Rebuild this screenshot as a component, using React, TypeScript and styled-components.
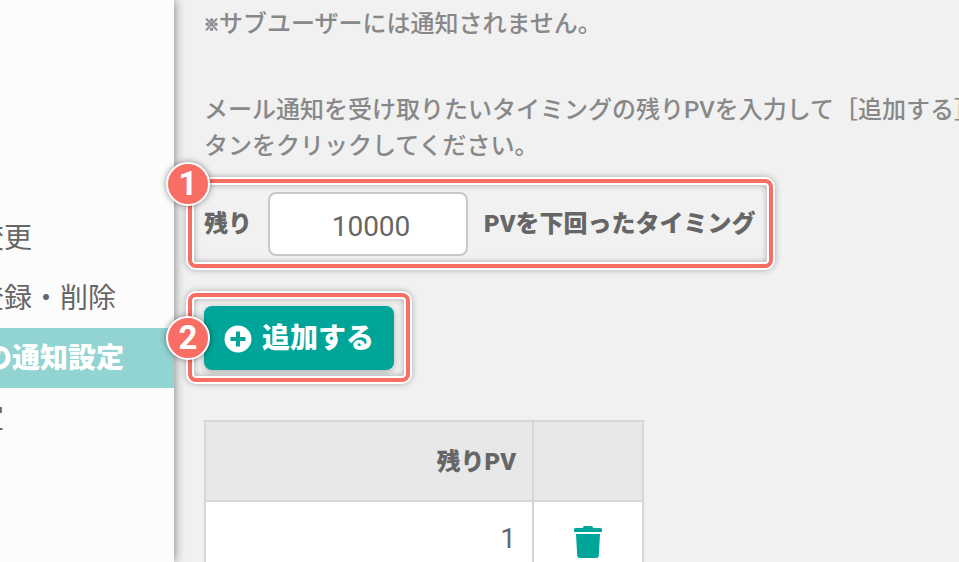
import React from "react";
import styled, { createGlobalStyle } from "styled-components";

const GlobalStyle = createGlobalStyle`
  *, *::before, *::after { box-sizing: border-box; }
  body {
    margin: 0;
    background: #f1f1f1;
    color: #666;
    font-family: Roboto, "Noto Sans CJK JP", sans-serif;
    font-size: 24px;
    line-height: 36px;
  }
`;

const Page = styled.div`
  display: flex;
  height: 100vh;
  overflow: hidden;
`;

const Sidebar = styled.nav`
  position: relative;
  flex: 0 0 174px;
  padding-top: 208px;
  background: #fcfcfc;
  box-shadow: 0 0 10px rgba(0, 0, 0, 0.5);
`;

const Menu = styled.ul`
  margin: 0;
  padding: 0;
  list-style: none;
  overflow: hidden;
`;

const MenuLink = styled.a<{ $active?: boolean }>`
  display: block;
  height: 60px;
  text-indent: ${(p) => (p.$active ? "-16px" : "-24px")};
  font-size: 28px;
  line-height: 62px;
  white-space: nowrap;
  text-decoration: none;
  font-weight: ${(p) => (p.$active ? 900 : 400)};
  color: ${(p) => (p.$active ? "#fff" : "#666")};
  background: ${(p) => (p.$active ? "#92d4d1" : "transparent")};
`;

const Main = styled.main`
  flex: 1;
  min-width: 0;
  padding: 6px 0 0 30px;
`;

const Note = styled.p`
  margin: 0;
  color: #888;
  font-weight: 500;
  white-space: nowrap;
`;

const NoteMark = styled.span`
  font-size: 15px;
  line-height: 15px;
  vertical-align: 2px;
  -webkit-text-stroke: 1px currentColor;
`;

const Guide = styled(Note)`
  margin-top: 50px;
`;

const Frame = styled.div`
  position: relative;
  display: flex;
  align-items: center;
  gap: 16px;
  width: fit-content;
  margin: 0 0 25px -16px;
  padding: 9px 12px 8px;
  border: 4px solid #f86e64;
  border-radius: 8px;
  box-shadow:
    0 0 0 2px #fff,
    0 0 6px 2px rgba(0, 0, 0, 0.3),
    inset 0 0 0 2px #fff,
    inset 0 0 6px 2px rgba(0, 0, 0, 0.3);
`;

const ThresholdFrame = styled(Frame)`
  margin-top: 15px;
  padding-right: 13px;
`;

const Badge = styled.span<{ $middle?: boolean }>`
  position: absolute;
  left: -26px;
  top: ${(p) => (p.$middle ? "calc(50% - 22px)" : "-21px")};
  width: 44px;
  height: 44px;
  border: 2px solid #fff;
  border-radius: 50%;
  background: #f86e64;
  box-shadow: 0 0 6px rgba(0, 0, 0, 0.45);
  color: #fff;
  font-size: 33px;
  font-weight: 700;
  line-height: 40px;
  text-align: center;
`;

const FieldLabel = styled.label`
  font-weight: 900;
  white-space: nowrap;
`;

const NumberInput = styled.input`
  width: 200px;
  height: 64px;
  padding: 4px 0 0 6px;
  border: 2px solid #c8c8c8;
  border-radius: 8px;
  background: #fff;
  color: #666;
  font: 400 28px Roboto, "Noto Sans CJK JP", sans-serif;
  text-align: center;
`;

const AddButton = styled.button`
  display: flex;
  align-items: center;
  gap: 10px;
  height: 64px;
  padding: 2px 20px 0;
  border: 0;
  border-radius: 8px;
  background: #00a59a;
  box-shadow: 0 2px 6px rgba(0, 0, 0, 0.25);
  color: #fff;
  font: 900 28px/60px Roboto, "Noto Sans CJK JP", sans-serif;
  white-space: nowrap;
`;

const Table = styled.table`
  width: 440px;
  margin-top: 38px;
  border-collapse: collapse;
  table-layout: fixed;
`;

const HeadCell = styled.th<{ $action?: boolean }>`
  width: ${(p) => (p.$action ? "110px" : "auto")};
  height: 80px;
  padding: 2px 16px 0;
  border: 2px solid #d6d6d6;
  background: #e8e8e8;
  text-align: right;
  font-weight: 900;
`;

const Cell = styled.td<{ $action?: boolean }>`
  height: 80px;
  padding: ${(p) => (p.$action ? "0 0 2px" : "0 16px 4px")};
  border: 2px solid #d6d6d6;
  background: #fff;
  font-size: 28px;
  text-align: ${(p) => (p.$action ? "center" : "right")};
`;

const IconButton = styled.button`
  display: inline-flex;
  padding: 0;
  border: 0;
  background: none;
  color: #00a59a;
  vertical-align: middle;
`;

const PlusIcon = () => (
  <svg width="28" height="28" viewBox="0 0 28 28" aria-hidden="true">
    <circle cx="14" cy="14" r="13.5" fill="#fff" />
    <path d="M14 6.5v15M6.5 14h15" stroke="#00a59a" strokeWidth="4" />
  </svg>
);

const TrashIcon = () => (
  <svg width="28" height="32" viewBox="0 0 28 32" fill="currentColor" aria-hidden="true">
    <path d="M10.500 0h7q1.500 0 1.500 2H26.500q1.500 0 1.500 1.500V6H0V3.500Q0 2 1.500 2H9q0-2 1.500-2z" />
    <path d="M2 8h24l-1.200 21.500q-.2 2.500-2.500 2.500H5.700q-2.300 0-2.500-2.500z" />
  </svg>
);

export default function App() {
  return (
    <>
      <GlobalStyle />
      <Page>
        <Sidebar>
          <Menu>
            <li><MenuLink href="#change">変更</MenuLink></li>
            <li><MenuLink href="#register">登録・削除</MenuLink></li>
            <li><MenuLink href="#notice" $active aria-current="page">の通知設定</MenuLink></li>
            <li><MenuLink href="#settings">定</MenuLink></li>
          </Menu>
        </Sidebar>
        <Main>
          <Note><NoteMark>※</NoteMark>サブユーザーには通知されません。</Note>
          <Guide>
            メール通知を受け取りたいタイミングの残りPVを入力して［追加する］
            <br />
            タンをクリックしてください。
          </Guide>
          <ThresholdFrame>
            <Badge>1</Badge>
            <FieldLabel htmlFor="threshold">残り</FieldLabel>
            <NumberInput id="threshold" type="text" inputMode="numeric" defaultValue="10000" />
            <FieldLabel htmlFor="threshold">PVを下回ったタイミング</FieldLabel>
          </ThresholdFrame>
          <Frame>
            <Badge $middle>2</Badge>
            <AddButton type="button">
              <PlusIcon />
              追加する
            </AddButton>
          </Frame>
          <Table>
            <thead>
              <tr>
                <HeadCell scope="col">残りPV</HeadCell>
                <HeadCell scope="col" $action aria-label="削除" />
              </tr>
            </thead>
            <tbody>
              <tr>
                <Cell>1</Cell>
                <Cell $action>
                  <IconButton type="button" aria-label="削除">
                    <TrashIcon />
                  </IconButton>
                </Cell>
              </tr>
            </tbody>
          </Table>
        </Main>
      </Page>
    </>
  );
}
